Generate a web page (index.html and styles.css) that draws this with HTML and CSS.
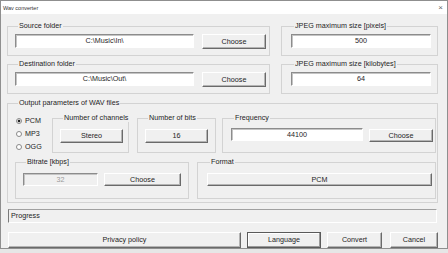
FILE: index.html
```html
<!DOCTYPE html>
<html lang="en">
<head>
<meta charset="UTF-8">
<title>Wav converter</title>
<link rel="stylesheet" href="styles.css">
</head>
<body>
<div class="window">
  <div class="titlebar">
    <span class="title">Wav converter</span>
    <span class="close">×</span>
  </div>
  <div class="content">
    <div class="row">
      <fieldset class="group g-folder">
        <legend>Source folder</legend>
        <div class="group-body">
          <div class="textbox tb-path">C:\Music\In\</div>
          <button class="btn btn-choose">Choose</button>
        </div>
      </fieldset>
      <fieldset class="group g-jpeg">
        <legend>JPEG maximum size [pixels]</legend>
        <div class="group-body">
          <div class="textbox tb-wide">500</div>
        </div>
      </fieldset>
    </div>
    <div class="row row-2">
      <fieldset class="group g-folder">
        <legend>Destination folder</legend>
        <div class="group-body">
          <div class="textbox tb-path">C:\Music\Out\</div>
          <button class="btn btn-choose">Choose</button>
        </div>
      </fieldset>
      <fieldset class="group g-jpeg">
        <legend>JPEG maximum size [kilobytes]</legend>
        <div class="group-body">
          <div class="textbox tb-wide">64</div>
        </div>
      </fieldset>
    </div>

    <fieldset class="group g-output">
      <legend>Output parameters of WAV files</legend>
      <div class="out-row">
        <div class="radios">
          <div class="radio-item"><span class="radio checked"></span>PCM</div>
          <div class="radio-item"><span class="radio"></span>MP3</div>
          <div class="radio-item"><span class="radio"></span>OGG</div>
        </div>
        <fieldset class="group sub g-channels">
          <legend>Number of channels</legend>
          <div class="group-body">
            <button class="btn btn-small">Stereo</button>
          </div>
        </fieldset>
        <fieldset class="group sub g-bits">
          <legend>Number of bits</legend>
          <div class="group-body">
            <button class="btn btn-small">16</button>
          </div>
        </fieldset>
        <fieldset class="group sub g-freq">
          <legend>Frequency</legend>
          <div class="group-body">
            <div class="textbox tb-freq">44100</div>
            <button class="btn btn-freq">Choose</button>
          </div>
        </fieldset>
      </div>
      <div class="out-row out-row-2">
        <fieldset class="group sub g-bitrate">
          <legend>Bitrate [kbps]</legend>
          <div class="group-body">
            <div class="textbox tb-bitrate disabled">32</div>
            <button class="btn btn-bitrate">Choose</button>
          </div>
        </fieldset>
        <fieldset class="group sub g-format">
          <legend>Format</legend>
          <div class="group-body">
            <button class="btn btn-format">PCM</button>
          </div>
        </fieldset>
      </div>
    </fieldset>

    <div class="progress">Progress</div>

    <div class="actions">
      <button class="btn btn-privacy">Privacy policy</button>
      <button class="btn btn-language">Language</button>
      <button class="btn btn-convert">Convert</button>
      <button class="btn btn-cancel">Cancel</button>
    </div>
  </div>
</div>
</body>
</html>
```

FILE: styles.css
```css
body {
  margin: 0;
  background: #e6e6e6;
  font-family: "Liberation Sans", Arial, sans-serif;
  color: #1e1e1e;
}
.window {
  width: 448px;
  height: 249px;
  box-sizing: border-box;
  border: 1px solid #8f8f8f;
  background: #f0f0f0;
  overflow: hidden;
}
.titlebar {
  height: 13px;
  background: #fff;
  display: flex;
  align-items: center;
  justify-content: space-between;
  padding: 0 4px 0 2px;
}
.title { font-size: 5.5px; color: #333; }
.close { font-size: 8px; color: #666; line-height: 8px; }

.content {
  padding: 8px 9px 0 6px;
  font-size: 7.2px;
  line-height: 8px;
}

/* group boxes */
.group {
  margin: 0;
  padding: 4px 6px 6px 7px;
  border: 1px solid #d3d3d3;
  box-sizing: border-box;
  min-width: 0;
}
.group legend {
  font-size: 7.2px;
  line-height: 8px;
  padding: 0 1px;
  margin-left: 3px;
  white-space: nowrap;
}
.group-body {
  display: flex;
  align-items: flex-start;
}

.row { display: flex; gap: 11px; }
.row-2 { margin-top: 4px; }
.g-folder { width: 263px; padding-right: 3px; }
.g-jpeg { flex: 1; padding-left: 9px; padding-right: 6px; }

/* text boxes */
.textbox {
  height: 14px;
  box-sizing: border-box;
  background: #fff;
  color: #1e1e1e;
  border: 1px solid #fff;
  border-top-color: #8c8c8c;
  border-left-color: #8c8c8c;
  box-shadow: inset 1px 1px #c4c4c4;
  text-align: center;
  line-height: 12px;
  white-space: nowrap;
}
.textbox.disabled { background: #f0f0f0; color: #9a9a9a; }
.tb-path { width: 179px; margin-right: 8px; }
.tb-wide { flex: 1; }
.tb-freq { width: 132px; height: 13px; line-height: 11px; margin-right: 6px; }
.tb-bitrate { width: 75px; height: 13px; line-height: 11px; margin-right: 6px; }

/* buttons */
.btn {
  height: 15px;
  box-sizing: border-box;
  padding: 0;
  font-family: inherit;
  font-size: 7.2px;
  line-height: 8px;
  color: #1e1e1e;
  background: #f0f0f0;
  border: 1px solid #fff;
  border-right-color: #6a6a6a;
  border-bottom-color: #6a6a6a;
  box-shadow: inset -1px -1px #b4b4b4;
}
.btn-choose { width: 64px; }
.btn-freq { width: 64px; height: 13px; margin-top: 1px; }
.btn-small { width: 63px; height: 14px; }
.btn-bitrate { width: 77px; height: 13px; }
.btn-format { flex: 1; height: 13px; }

/* output parameters */
.g-output {
  margin-top: 5px;
  padding: 7px 1px 3px 7px;
}
.out-row { display: flex; }
.out-row-2 { margin-top: 5px; }
.radios { width: 36px; margin-left: 1px; }
.radio-item {
  height: 13px;
  display: flex;
  align-items: center;
}
.radio {
  width: 4px;
  height: 4px;
  border: 1px solid #8a8a8a;
  border-radius: 50%;
  background: #fff;
  margin-right: 3px;
}
.radio.checked { background: radial-gradient(circle, #222 40%, #fff 60%); }

.sub { padding: 7px 4px 9px 7px; }
.g-channels { width: 77px; padding-bottom: 8px; }
.g-bits { width: 79px; margin-left: 8px; padding-bottom: 8px; }
.g-freq { flex: 1; margin-left: 6px; padding: 6px 2px 9px 8px; }
.g-bitrate { width: 174px; padding-bottom: 12px; }
.g-format { flex: 1; margin-left: 8px; padding-left: 9px; padding-right: 3px; padding-bottom: 12px; }

/* progress + actions */
.progress {
  margin: 6px 1px 0 1px;
  height: 14px;
  box-sizing: border-box;
  border: 1px solid #fff;
  border-top-color: #a0a0a0;
  border-left-color: #7a7a7a;
  padding-left: 2px;
  line-height: 12px;
}
.actions {
  display: flex;
  margin: 9px 0 0 1px;
}
.actions .btn { height: 16px; }
.btn-privacy { flex: 1; }
.btn-language {
  width: 74px;
  margin-left: 6px;
  border: 1px solid #5a5a5a;
  box-shadow: inset -1px -1px #9a9a9a, inset 1px 1px #fff;
}
.btn-convert { width: 55px; margin-left: 6px; }
.btn-cancel { width: 48px; margin-left: 8px; }
```
